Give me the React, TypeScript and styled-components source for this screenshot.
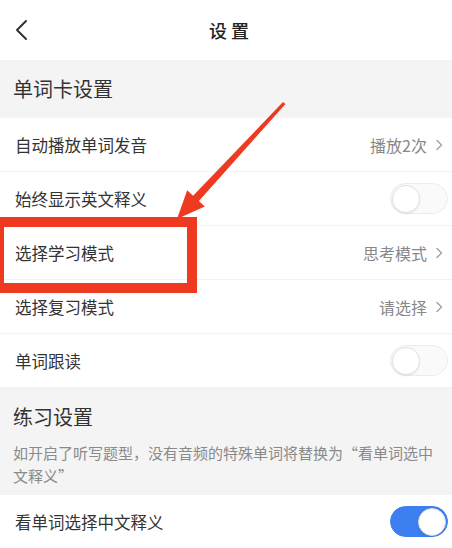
import React from "react"
import styled, { createGlobalStyle } from "styled-components"

const GlobalStyle = createGlobalStyle`
  html, body {
    margin: 0;
    padding: 0;
    background: #ffffff;
  }
  body {
    font-family: "Noto Sans CJK SC", "Noto Sans", sans-serif;
    color: #333333;
  }
`

type RowItem = {
  id: number
  label: string
  value?: string
  toggle?: boolean
}

const cardRows: RowItem[] = [
  { id: 1, label: "自动播放单词发音", value: "播放2次" },
  { id: 2, label: "始终显示英文释义", toggle: false },
  { id: 3, label: "选择学习模式", value: "思考模式" },
  { id: 4, label: "选择复习模式", value: "请选择" },
  { id: 5, label: "单词跟读", toggle: false },
]

const App = () => {
  return (
    <>
      <GlobalStyle />
      <PageStyled>
        <HeaderStyled>
          <BackStyled>
            <svg width="14" height="22" viewBox="0 0 14 22">
              <path
                d="M12 2 L3 11 L12 20"
                fill="none"
                stroke="#333"
                strokeWidth="2"
                strokeLinecap="round"
                strokeLinejoin="round"
              />
            </svg>
          </BackStyled>
          <TitleStyled>设 置</TitleStyled>
        </HeaderStyled>

        <SectionStyled>
          <SectionHeadingStyled>单词卡设置</SectionHeadingStyled>
        </SectionStyled>

        {cardRows.map(item => (
          <RowStyled key={item.id}>
            <LabelStyled>{item.label}</LabelStyled>
            {item.value !== undefined && (
              <ValueStyled>
                {item.value}
                <svg width="8" height="12" viewBox="0 0 8 12">
                  <path
                    d="M2 1.5 L6.5 6 L2 10.5"
                    fill="none"
                    stroke="#a0a0a0"
                    strokeWidth="1.3"
                    strokeLinecap="round"
                    strokeLinejoin="round"
                  />
                </svg>
              </ValueStyled>
            )}
            {item.toggle !== undefined && (
              <SwitchStyled on={item.toggle}>
                <KnobStyled on={item.toggle} />
              </SwitchStyled>
            )}
          </RowStyled>
        ))}

        <SectionStyled tall>
          <SectionHeadingStyled>练习设置</SectionHeadingStyled>
          <SectionNoteStyled>
            如开启了听写题型，没有音频的特殊单词将替换为“看单词选中文释义”
          </SectionNoteStyled>
        </SectionStyled>

        <RowStyled last>
          <LabelStyled>看单词选择中文释义</LabelStyled>
          <SwitchStyled on>
            <KnobStyled on />
          </SwitchStyled>
        </RowStyled>

        <MarkBoxStyled />
        <ArrowStyled width="452" height="548" viewBox="0 0 452 548">
          <polygon
            points="283,102 193.1,195.7 187.2,190.3 177,219 204.8,206.5 198.9,201.1 285.5,104"
            fill="#ee3a21"
          />
        </ArrowStyled>
      </PageStyled>
    </>
  )
}

const PageStyled = styled.div`
  position: relative;
  width: 452px;
  height: 548px;
  overflow: hidden;
  background: #ffffff;
`

const HeaderStyled = styled.div`
  height: 60px;
  display: flex;
  align-items: center;
  justify-content: center;
  position: relative;
`

const BackStyled = styled.div`
  position: absolute;
  left: 14px;
  top: 19px;
  display: flex;
`

const TitleStyled = styled.div`
  font-size: 18px;
  font-weight: 500;
  color: #222222;
  margin-left: 6px;
  white-space: pre;
`

type Section = {
  tall?: boolean
}

const SectionStyled = styled.div<Section>`
  background: #f4f4f4;
  height: ${props => (props.tall ? "107px" : "58px")};
  padding: ${props => (props.tall ? "15px 13px 0" : "0 13px")};
  box-sizing: border-box;
  display: flex;
  flex-direction: column;
  justify-content: ${props => (props.tall ? "flex-start" : "center")};
`

const SectionHeadingStyled = styled.div`
  font-size: 20px;
  line-height: 28px;
  color: #333333;
`

const SectionNoteStyled = styled.div`
  font-size: 15px;
  line-height: 23px;
  color: #8a8a8a;
  margin-top: 10px;
  padding-right: 4px;
`

type Row = {
  last?: boolean
}

const RowStyled = styled.div<Row>`
  height: ${props => (props.last ? "53px" : "54px")};
  display: flex;
  align-items: center;
  justify-content: space-between;
  padding: 0 4px 0 15px;
  box-sizing: border-box;
  border-bottom: ${props => (props.last ? "none" : "1px solid #f3f3f3")};
`

const LabelStyled = styled.div`
  font-size: 16.5px;
  color: #333333;
`

const ValueStyled = styled.div`
  display: flex;
  align-items: center;
  gap: 8px;
  font-size: 16px;
  color: #888888;
  padding-right: 5px;
`

type Toggle = {
  on?: boolean
}

const SwitchStyled = styled.div<Toggle>`
  width: 58px;
  height: 31px;
  border-radius: 16px;
  box-sizing: border-box;
  background: ${props => (props.on ? "#3d7ff0" : "#fafafa")};
  border: 1px solid ${props => (props.on ? "#3d7ff0" : "#ececec")};
  display: flex;
  align-items: center;
  justify-content: ${props => (props.on ? "flex-end" : "flex-start")};
  padding: 0 1px;
`

const KnobStyled = styled.div<Toggle>`
  width: 28px;
  height: 28px;
  border-radius: 50%;
  background: #ffffff;
  box-sizing: border-box;
  border: 1px solid ${props => (props.on ? "#d8d8d8" : "#e2e2e2")};
  box-shadow: 0 1px 2px rgba(0, 0, 0, 0.08);
`

const MarkBoxStyled = styled.div`
  position: absolute;
  left: -6px;
  top: 217px;
  width: 203px;
  height: 76px;
  box-sizing: border-box;
  border: 10px solid #ee3a21;
`

const ArrowStyled = styled.svg`
  position: absolute;
  left: 0;
  top: 0;
  pointer-events: none;
`

export default App
